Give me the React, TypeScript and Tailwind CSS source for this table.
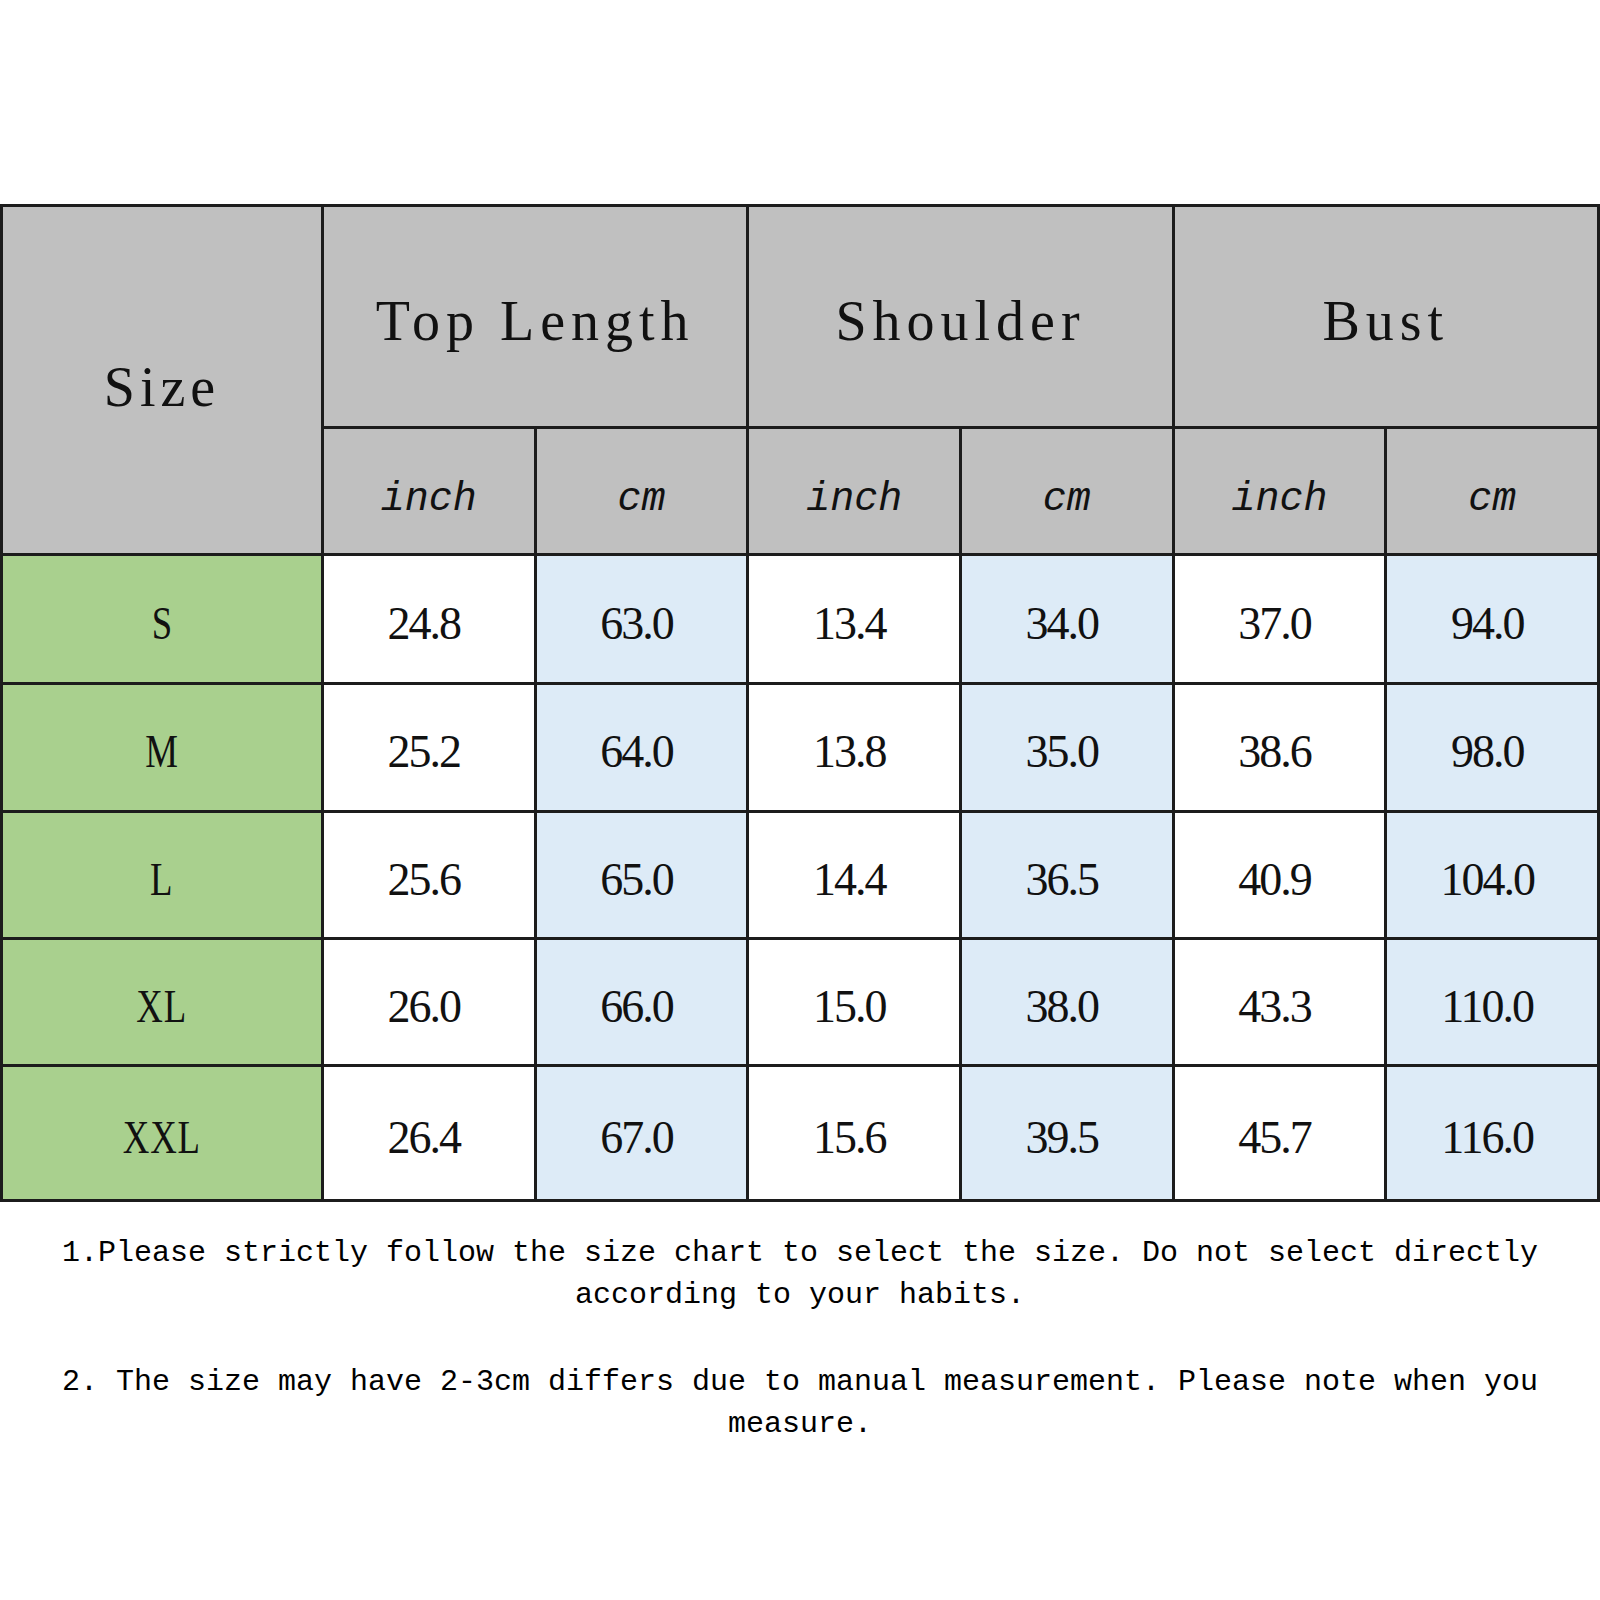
import React from "react";

const GROUPS = ["Top Length", "Shoulder", "Bust"];

const ROWS: { size: string; values: string[] }[] = [
  { size: "S", values: ["24.8", "63.0", "13.4", "34.0", "37.0", "94.0"] },
  { size: "M", values: ["25.2", "64.0", "13.8", "35.0", "38.6", "98.0"] },
  { size: "L", values: ["25.6", "65.0", "14.4", "36.5", "40.9", "104.0"] },
  { size: "XL", values: ["26.0", "66.0", "15.0", "38.0", "43.3", "110.0"] },
  { size: "XXL", values: ["26.4", "67.0", "15.6", "39.5", "45.7", "116.0"] },
];

const serif = "font-['Liberation_Serif','Times_New_Roman',serif]";
const mono = "font-['Liberation_Mono','Courier_New',monospace]";

export default function App() {
  return (
    <div className="w-[1600px] min-h-[1600px] bg-white pt-[204px] text-[#111]">
      {/* size chart */}
      <div className="grid grid-cols-[318px_repeat(6,1fr)] grid-rows-[219px_124px_126px_125px_124px_124px_132px] gap-[3px] bg-[#1c1c1c] p-[3px]">
        <div className="row-span-2 flex items-center justify-center bg-[#c0c0c0] pt-[14px]">
          <span className={`${serif} text-[56px] tracking-[5px]`}>Size</span>
        </div>
        {GROUPS.map((g) => (
          <div
            key={g}
            className="col-span-2 flex items-center justify-center bg-[#c0c0c0] pt-[8px]"
          >
            <span className={`${serif} text-[56px] tracking-[6px]`}>{g}</span>
          </div>
        ))}
        {GROUPS.flatMap((g) => [
          <div
            key={g + "-in"}
            className="flex items-center justify-center bg-[#c0c0c0] pt-[18px]"
          >
            <span className={`${mono} text-[40px] italic`}>inch</span>
          </div>,
          <div
            key={g + "-cm"}
            className="flex items-center justify-center bg-[#c0c0c0] pt-[18px]"
          >
            <span className={`${mono} text-[40px] italic`}>cm</span>
          </div>,
        ])}
        {ROWS.map((r) => (
          <React.Fragment key={r.size}>
            <div className="flex items-center justify-center bg-[#a9d08e] pt-[8px]">
              <span
                className={`${serif} inline-block scale-x-80 text-[46px] tracking-[1px]`}
              >
                {r.size}
              </span>
            </div>
            {r.values.map((v, i) => (
              <div
                key={i}
                className={`flex items-center justify-center pt-[8px] pr-[10px] ${
                  i % 2 === 0 ? "bg-white" : "bg-[#ddebf7]"
                }`}
              >
                <span className={`${serif} text-[46px] tracking-[-2px]`}>
                  {v}
                </span>
              </div>
            ))}
          </React.Fragment>
        ))}
      </div>

      {/* notes */}
      <div
        className={`${mono} mx-auto mt-[30px] w-[1500px] text-center text-[30px] leading-[42px] text-black`}
      >
        <p>
          1.Please strictly follow the size chart to select the size. Do not
          select directly according to your habits.
        </p>
        <p className="mt-[45px]">
          2. The size may have 2-3cm differs due to manual measurement. Please
          note when you measure.
        </p>
      </div>
    </div>
  );
}
